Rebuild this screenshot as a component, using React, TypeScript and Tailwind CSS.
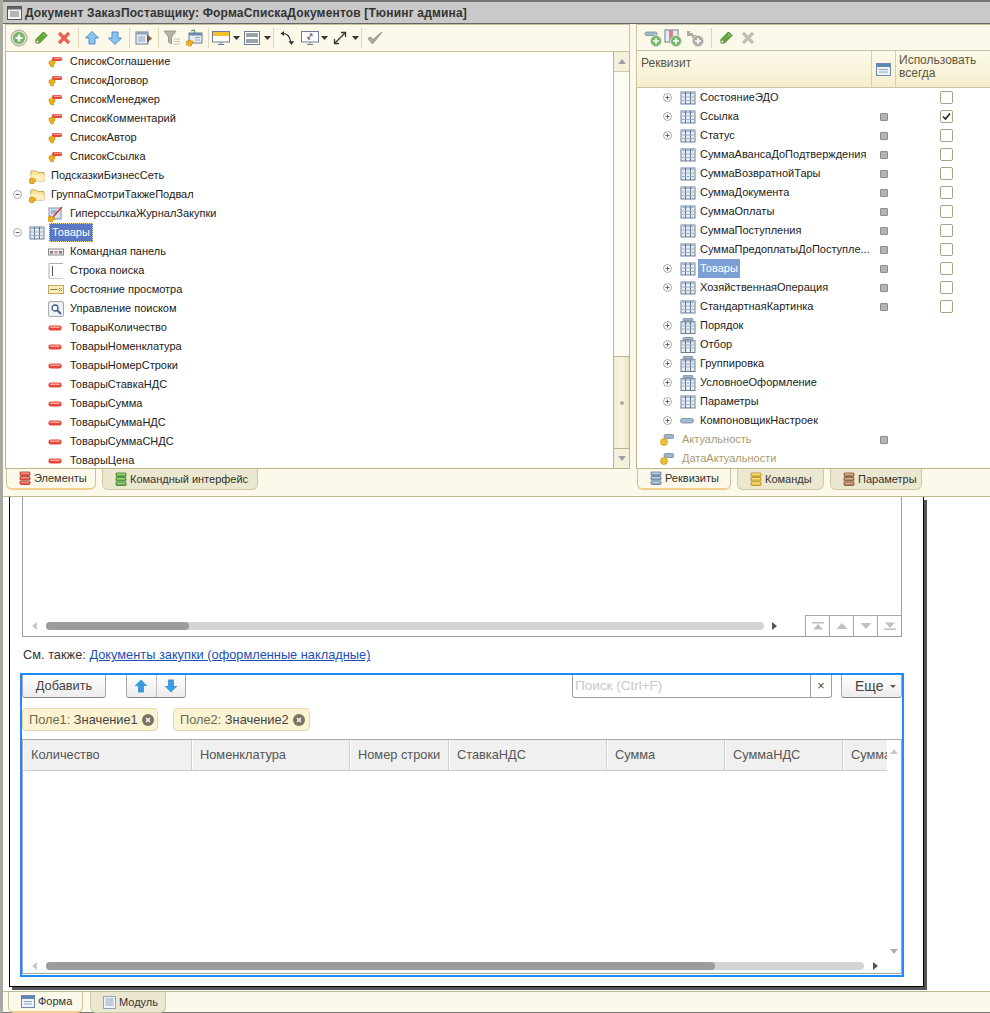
const TableIcon = ({ cap = false }: { cap?: boolean }) => (
  <svg width="16" height="16" viewBox="0 0 16 16">
    {cap && <rect x="3" y="0.5" width="10" height="2.5" rx="1" fill="#9fb4c8" stroke="#6d8298" strokeWidth="0.7" />}
    <rect x="1" y={cap ? 3.5 : 2} width="14" height="12" fill="#e4ecf4" stroke="#6c7f95" />
    <rect x="1" y={cap ? 3.5 : 2} width="14" height="2" fill="#a9bccf" />
    <path d={cap ? "M5.5 3.5V15.5M10.5 3.5V15.5" : "M5.5 2V14M10.5 2V14"} stroke="#5f7389" strokeWidth="1" />
    <path d={cap ? "M2 8h12M2 11h12" : "M2 7h12M2 10.5h12"} stroke="#9fb0c2" strokeWidth="1" />
  </svg>
);

const Expander = ({ open = false }: { open?: boolean }) => (
  <svg width="9" height="9" viewBox="0 0 9 9" className="block">
    <circle cx="4.5" cy="4.5" r="4" fill="#fff" stroke="#a8a8a8" />
    <path d={open ? "M2.5 4.5h4" : "M2.5 4.5h4M4.5 2.5v4"} stroke="#666" strokeWidth="1" />
  </svg>
);

const RedBar = () => (
  <svg width="14" height="8" viewBox="0 0 14 8">
    <rect x="0.5" y="1.5" width="13" height="5" rx="2" fill="#e8463a" />
    <rect x="2" y="2.5" width="10" height="1.5" rx="0.7" fill="#f7a79c" />
  </svg>
);

const KeyBar = () => (
  <svg width="14" height="12" viewBox="0 0 14 12">
    <rect x="4" y="1" width="10" height="4" rx="1.6" fill="#e8463a" />
    <rect x="6" y="1.7" width="7" height="1.2" fill="#f7a79c" />
    <path d="M1 5h2v-1h2v1h2v3h-1.500v3h-2l-0.500-1h-1v-2h-1z" fill="#eeb11d" stroke="#b9810f" strokeWidth="0.5" />
  </svg>
);

const AttrBar = ({ key2 = false }: { key2?: boolean }) =>
  key2 ? (
    <svg width="14" height="12" viewBox="0 0 14 12">
      <rect x="4" y="0.5" width="10" height="4" rx="1.8" fill="#9fb4c8" stroke="#64809a" strokeWidth="0.7" />
      <circle cx="4" cy="8" r="3.500" fill="#f0c030" stroke="#c29a20" strokeWidth="0.7" />
    </svg>
  ) : (
    <svg width="14" height="6" viewBox="0 0 14 6">
      <rect x="0.5" y="0.5" width="13" height="4.500" rx="2" fill="#a8bccf" stroke="#64809a" strokeWidth="0.7" />
    </svg>
  );

const Folder = () => (
  <svg width="16" height="16" viewBox="0 0 16 16">
    <path d="M2 3h5l1.500 1.500H15V13H2z" fill="#fbe39a" stroke="#c9a94f" />
    <path d="M2 7h13v6H2z" fill="#fdeeb9" />
    <path d="M0 11h2v-1h2v1h2.500v2.500H5v2.500H2l-0.500-1H0z" fill="#eeb11d" stroke="#b9810f" strokeWidth="0.5" />
  </svg>
);

const LinkIcon = () => (
  <svg width="16" height="16" viewBox="0 0 16 16">
    <rect x="1" y="2" width="12" height="11" fill="#d6e2f0" stroke="#7f93ab" />
    <path d="M3 5h6M3 7h5" stroke="#6c88aa" />
    <path d="M5 11L14 1" stroke="#d8281c" strokeWidth="1.200" />
    <path d="M0 11h2v-1h2v1h2.500v2.500H5v2.500H2l-0.500-1H0z" fill="#eeb11d" stroke="#b9810f" strokeWidth="0.5" />
  </svg>
);

const CmdBar = () => (
  <svg width="16" height="8" viewBox="0 0 16 8">
    <rect x="0.5" y="1" width="15" height="6" fill="#eee" stroke="#888" />
    <rect x="2" y="3" width="3" height="2.500" fill="#777" />
    <rect x="6.500" y="3" width="3" height="2.500" fill="#c88" />
    <rect x="11" y="3" width="3" height="2.500" fill="#777" />
  </svg>
);

const SearchLine = () => (
  <svg width="16" height="16" viewBox="0 0 16 16">
    <path d="M1 15.500V0.500H15" fill="none" stroke="#b0b0b0" />
    <path d="M1 15.500H15" stroke="#ccc" />
    <path d="M4.500 3v10" stroke="#555" />
  </svg>
);

const StateIcon = () => (
  <svg width="16" height="10" viewBox="0 0 16 10">
    <rect x="0.5" y="0.5" width="15" height="8" fill="#fbeeb8" stroke="#c8a860" />
    <path d="M2.500 4.500h7" stroke="#8a7a40" />
    <path d="M11 3l3 3M14 3l-3 3" stroke="#a89858" />
  </svg>
);

const SearchBtn = () => (
  <svg width="16" height="16" viewBox="0 0 16 16">
    <rect x="0.500" y="0.500" width="15" height="15" rx="1.500" fill="#eef0f3" stroke="#a8a8a8" />
    <circle cx="7" cy="7" r="3" fill="#fff" stroke="#3f5f85" strokeWidth="1.300" />
    <path d="M9.500 9.500L13 13" stroke="#3f5f85" strokeWidth="1.800" />
  </svg>
);

const Plus = () => (
  <svg width="18" height="18" viewBox="0 0 18 18">
    <circle cx="9" cy="9" r="8" fill="#dcdcd0" stroke="#a8a8a0" />
    <circle cx="9" cy="9" r="6" fill="#74b765" />
    <path d="M9 5.500v7M5.500 9h7" stroke="#fff" strokeWidth="2.200" />
  </svg>
);

const Pencil = () => (
  <svg width="16" height="16" viewBox="0 0 16 16">
    <path d="M10.500 2l3.500 3.500L6.500 13H3v-3.500z" fill="#62a93e" stroke="#3c7f2a" />
    <path d="M3 13l1-3 2 2z" fill="#e8e4c8" />
    <path d="M10 4l2 2" stroke="#b8e090" />
  </svg>
);

const Cross = ({ grey = false }: { grey?: boolean }) => (
  <svg width="16" height="16" viewBox="0 0 16 16">
    <path d="M3 3l10 10M13 3L3 13" stroke={grey ? "#c4c0b0" : "#e8604f"} strokeWidth="3.200" />
  </svg>
);

const HouseArrow = ({ down = false }: { down?: boolean }) => (
  <svg width="16" height="16" viewBox="0 0 16 16">
    <path d={down ? "M8 14.500L14.500 8H11V2H5v6H1.500z" : "M8 1.500L14.500 8H11v6H5V8H1.500z"} fill="#8cc2ee" stroke="#4f8fc8" />
  </svg>
);

const Dd = () => (
  <svg width="7" height="4" viewBox="0 0 7 4">
    <path d="M0 0h7L3.500 4z" fill="#333" />
  </svg>
);

const Sep = ({ w }: { w: string }) => (
  <div className={`${w} flex justify-center`}>
    <div className="w-px h-[20px] bg-[#ddd7b8]" />
  </div>
);

const ListArrowIcon = () => (
  <svg width="18" height="16" viewBox="0 0 18 16">
    <rect x="1" y="2" width="12" height="12" fill="#e8eef5" stroke="#6c7f95" />
    <rect x="1" y="2" width="12" height="2.500" fill="#8ea4ba" />
    <path d="M3 7h7M3 9h7M3 11h7" stroke="#8ea4ba" />
    <path d="M12 4.500L17 8.500L12 12.500z" fill="#7a5530" />
  </svg>
);

const FunnelIcon = () => (
  <svg width="18" height="16" viewBox="0 0 18 16">
    <path d="M1 1h12L8.500 7v7L5.500 12V7z" fill="#b8b4a4" stroke="#9c9888" />
    <path d="M11 9h6M11 11.500h6M11 14h6" stroke="#c4c0b0" />
  </svg>
);

const FormKeyIcon = () => (
  <svg width="18" height="18" viewBox="0 0 18 18">
    <path d="M5 2l3-1 1 3" fill="none" stroke="#4c9c48" strokeWidth="1.300" />
    <rect x="3" y="4" width="13" height="10" fill="#e4ecf4" stroke="#6c7f95" />
    <rect x="3" y="4" width="13" height="2.500" fill="#6c88aa" />
    <path d="M9 8.500h5M9 11h5" stroke="#8ea4ba" />
    <path d="M0.500 12h2v-1h2v1H7v2.500H5.500V17H2.500l-0.500-1H0.500z" fill="#eeb11d" stroke="#b9810f" strokeWidth="0.5" />
  </svg>
);

const MonitorIcon = ({ top = true }: { top?: boolean }) => (
  <svg width="18" height="16" viewBox="0 0 18 16">
    <rect x="0.500" y="1.500" width="17" height="10.500" fill="#fff" stroke="#6c7f95" />
    {top && <rect x="1" y="2" width="16" height="4" fill="#f4c430" />}
    {!top && <path d="M7 9l4-5M11 4H8.500M11 4v2.500M7 9h2.500M7 9V6.500" stroke="#555" fill="none" />}
    <path d="M6 14.500h6M9 12v2.500" stroke="#6c7f95" />
  </svg>
);

const RowsIcon = () => (
  <svg width="16" height="16" viewBox="0 0 16 16">
    <rect x="0.500" y="1.500" width="15" height="13" fill="#fff" stroke="#6c7f95" />
    <rect x="2" y="3" width="12" height="4" fill="#9aa2aa" />
    <rect x="2" y="9" width="12" height="4" fill="#9aa2aa" />
  </svg>
);

const SwapIcon = () => (
  <svg width="16" height="16" viewBox="0 0 16 16">
    <path d="M3 3.500C8 3 11 7 12 13" fill="none" stroke="#333" strokeWidth="1.200" />
    <path d="M5 1L1.500 3.500L5 6z" fill="#333" />
    <path d="M9.500 11.500L12.500 15L15 11z" fill="#333" />
  </svg>
);

const DiagIcon = () => (
  <svg width="14" height="14" viewBox="0 0 14 14">
    <path d="M2 12L12 2" stroke="#333" strokeWidth="1.300" />
    <path d="M8 1.500h4.500V6M1.500 8v4.500H6" fill="none" stroke="#333" strokeWidth="1.300" />
  </svg>
);

const CheckTool = () => (
  <svg width="18" height="16" viewBox="0 0 18 16">
    <path d="M2 8.500L6.500 14L16 2L7 9.500L4.500 7z" fill="#b0a8a0" stroke="#98908a" />
  </svg>
);

const AddField = ({ kind }: { kind: "bar" | "table" | "grey" }) => (
  <svg width="18" height="18" viewBox="0 0 18 18">
    {kind === "bar" && <rect x="1" y="3" width="12" height="3.500" rx="1.500" fill="#a8bccf" stroke="#64809a" strokeWidth="0.7" />}
    {kind === "table" && (
      <g>
        <rect x="1" y="1" width="13" height="12" fill="#e8eef5" stroke="#6c7f95" />
        <rect x="5" y="1" width="4" height="12" fill="#d98080" />
      </g>
    )}
    {kind === "grey" && <path d="M1 2h3v2h3v2h4V9H6V7H1z" fill="#b0ada0" />}
    <circle cx="12" cy="12" r="5.500" fill={kind === "grey" ? "#a8a8a0" : "#74b765"} stroke="#dcdcd0" />
    <path d="M12 9v6M9 12h6" stroke="#fff" strokeWidth="1.600" />
  </svg>
);

const Slot = ({ w, children }: { w: string; children: React.ReactNode }) => (
  <div className={`${w} h-full flex items-center justify-center`}>{children}</div>
);

const StackIcon = ({ from, to, line }: { from: string; to: string; line: string }) => (
  <svg width="12" height="15" viewBox="0 0 12 15">
    {[1, 5.500, 10].map((y) => (
      <g key={y}>
        <rect x="1" y={y} width="10" height="3.500" rx="0.800" fill={from} stroke={line} strokeWidth="0.800" />
        <rect x="2" y={y + 0.6} width="8" height="1" fill={to} />
      </g>
    ))}
  </svg>
);

const Tab = ({
  active = false,
  w,
  icon,
  children,
}: {
  active?: boolean;
  w: string;
  icon: React.ReactNode;
  children: React.ReactNode;
}) => (
  <div
    className={`${w} h-[21px] flex items-center gap-[3px] pl-[12px] rounded-b-[6px] border-x border-b text-[11px] whitespace-nowrap text-[#333] ${
      active ? "bg-[#fcf9ea] border-[#c9c3a0] border-b-[2px] border-b-[#f2cf8e]" : "bg-[#ece7cf] border-[#cfc9a8]"
    }`}
  >
    {icon}
    <span>{children}</span>
  </div>
);

const LeftRow = ({
  level,
  icon,
  text,
  exp,
  selected = false,
}: {
  level: 0 | 1;
  icon: React.ReactNode;
  text: string;
  exp?: boolean;
  selected?: boolean;
}) => (
  <div className={`h-[19px] flex items-center ${level === 1 ? "pl-[42px]" : "pl-[7px]"}`}>
    {level === 0 && <div className="w-[16px] flex items-center">{exp && <Expander open />}</div>}
    <div className="w-[22px] flex items-center">{icon}</div>
    {selected ? (
      <span className="-ml-[2px] px-[2px] h-[19px] flex items-center text-white bg-[#5b78c6] border border-dotted border-[#e8d890]">
        {text}
      </span>
    ) : (
      <span className="text-[#1c1c1c]">{text}</span>
    )}
  </div>
);

const leftItems: { text: string; kind: "key" | "red" | "cmd" | "line" | "state" | "search" }[] = [
  { text: "Командная панель", kind: "cmd" },
  { text: "Строка поиска", kind: "line" },
  { text: "Состояние просмотра", kind: "state" },
  { text: "Управление поиском", kind: "search" },
  { text: "ТоварыКоличество", kind: "red" },
  { text: "ТоварыНоменклатура", kind: "red" },
  { text: "ТоварыНомерСтроки", kind: "red" },
  { text: "ТоварыСтавкаНДС", kind: "red" },
  { text: "ТоварыСумма", kind: "red" },
  { text: "ТоварыСуммаНДС", kind: "red" },
  { text: "ТоварыСуммаСНДС", kind: "red" },
  { text: "ТоварыЦена", kind: "red" },
];

const iconByKind = {
  key: <KeyBar />,
  red: <RedBar />,
  cmd: <CmdBar />,
  line: <SearchLine />,
  state: <StateIcon />,
  search: <SearchBtn />,
};

const rightRows: {
  text: string;
  exp?: boolean;
  marker?: boolean;
  check?: "on" | "off";
  icon?: "cap" | "bar";
  selected?: boolean;
}[] = [
  { text: "СостояниеЭДО", exp: true, check: "off" },
  { text: "Ссылка", exp: true, marker: true, check: "on" },
  { text: "Статус", exp: true, marker: true, check: "off" },
  { text: "СуммаАвансаДоПодтверждения", marker: true, check: "off" },
  { text: "СуммаВозвратнойТары", marker: true, check: "off" },
  { text: "СуммаДокумента", marker: true, check: "off" },
  { text: "СуммаОплаты", marker: true, check: "off" },
  { text: "СуммаПоступления", marker: true, check: "off" },
  { text: "СуммаПредоплатыДоПоступле...", marker: true, check: "off" },
  { text: "Товары", exp: true, marker: true, check: "off", selected: true },
  { text: "ХозяйственнаяОперация", exp: true, marker: true, check: "off" },
  { text: "СтандартнаяКартинка", marker: true, check: "off" },
  { text: "Порядок", exp: true, icon: "cap" },
  { text: "Отбор", exp: true, icon: "cap" },
  { text: "Группировка", exp: true, icon: "cap" },
  { text: "УсловноеОформление", exp: true, icon: "cap" },
  { text: "Параметры", exp: true },
  { text: "КомпоновщикНастроек", exp: true, icon: "bar" },
];

const Marker = () => <div className="w-[8px] h-[8px] bg-[#b4b4b4] border border-[#8c8c8c] rounded-[1px]" />;

const Check = ({ on }: { on: boolean }) => (
  <div className="w-[13px] h-[13px] bg-white border border-[#a8a284] rounded-[2px] flex items-center justify-center">
    {on && (
      <svg width="9" height="9" viewBox="0 0 9 9">
        <path d="M1 4.500L3.500 7L8 1.500" fill="none" stroke="#222" strokeWidth="1.600" />
      </svg>
    )}
  </div>
);

const Tri = ({ dir, color }: { dir: "l" | "r" | "u" | "d"; color: string }) => {
  const d = { l: "M5 0v8L0 4z", r: "M0 0v8l5-4z", u: "M0 5h8L4 0z", d: "M0 0h8L4 5z" }[dir];
  return (
    <svg width={dir === "l" || dir === "r" ? 5 : 8} height={dir === "l" || dir === "r" ? 8 : 5} className="block">
      <path d={d} fill={color} />
    </svg>
  );
};

const NavBtn = ({ d }: { d: string }) => (
  <div className="w-[24px] h-full flex items-center justify-center border-l border-[#a8a8a8]">
    <svg width="12" height="8" viewBox="0 0 12 8">
      <path d={d} fill="#c0c0c0" />
    </svg>
  </div>
);

const Chip = ({ w, label, value }: { w: string; label: string; value: string }) => (
  <div className={`${w} h-[23px] flex items-center pl-[6px] gap-[4px] bg-[#fbf3d2] border border-[#e4d9a8] rounded-[4px]`}>
    <span className="text-[#6b6b50] whitespace-nowrap">
      {label} <span className="text-[#444]">{value}</span>
    </span>
    <svg width="12" height="12" viewBox="0 0 12 12" className="shrink-0">
      <circle cx="6" cy="6" r="6" fill="#7b7460" />
      <path d="M4 4l4 4M8 4l-4 4" stroke="#fff" strokeWidth="1.400" />
    </svg>
  </div>
);

const columns: { w: string; text: string }[] = [
  { w: "w-[169px]", text: "Количество" },
  { w: "w-[158px]", text: "Номенклатура" },
  { w: "w-[99px]", text: "Номер строки" },
  { w: "w-[158px]", text: "СтавкаНДС" },
  { w: "w-[118px]", text: "Сумма" },
  { w: "w-[118px]", text: "СуммаНДС" },
  { w: "w-[100px]", text: "СуммаСНДС" },
];

const App = () => {
  return (
    <div className="w-[990px] h-[1013px] overflow-hidden flex flex-col bg-white border-l-[3px] border-[#a8a8a0] text-[11px] font-['Liberation_Sans',Arial,sans-serif]">
      {/* заголовок */}
      <div className="h-[24px] -ml-[3px] pt-px shrink-0 flex items-center pl-[7px] gap-[3px] bg-[#c9c9c9] border-t-2 border-b border-t-[#777] border-b-[#666]">
        <svg width="15" height="14" viewBox="0 0 15 14">
          <rect x="0.500" y="0.500" width="14" height="13" fill="#f2f2f2" stroke="#555" />
          <rect x="1" y="1" width="13" height="2.500" fill="#666" />
          <path d="M3 6h9M3 8h9M3 10h9" stroke="#777" />
        </svg>
        <span className="font-bold text-[12px] tracking-[0.17px] text-[#333]">Документ ЗаказПоставщику: ФормаСпискаДокументов [Тюнинг админа]</span>
      </div>

      {/* панели конфигуратора */}
      <div className="h-[473px] shrink-0 flex bg-[#fcf9ea] border-b border-[#bdb58c]">
        <div className="ml-[2px] w-[625px] shrink-0 flex flex-col">
          <div className="h-[28px] flex items-center pl-px border-x border-t border-b border-[#c9c3a0]">
            <Slot w="w-[23px]"><Plus /></Slot>
            <Slot w="w-[22px]"><Pencil /></Slot>
            <Slot w="w-[24px]"><Cross /></Slot>
            <Sep w="w-[4px]" />
            <Slot w="w-[24px]"><HouseArrow /></Slot>
            <Slot w="w-[22px]"><HouseArrow down /></Slot>
            <Sep w="w-[6px]" />
            <Slot w="w-[24px]"><ListArrowIcon /></Slot>
            <Sep w="w-[4px]" />
            <Slot w="w-[23px]"><FunnelIcon /></Slot>
            <Slot w="w-[24px]"><FormKeyIcon /></Slot>
            <Sep w="w-[3px]" />
            <Slot w="w-[22px]"><MonitorIcon /></Slot>
            <Slot w="w-[9px]"><Dd /></Slot>
            <Slot w="w-[22px]"><RowsIcon /></Slot>
            <Slot w="w-[8px]"><Dd /></Slot>
            <Sep w="w-[4px]" />
            <Slot w="w-[24px]"><SwapIcon /></Slot>
            <Slot w="w-[21px]"><MonitorIcon top={false} /></Slot>
            <Slot w="w-[8px]"><Dd /></Slot>
            <Slot w="w-[24px]"><DiagIcon /></Slot>
            <Slot w="w-[7px]"><Dd /></Slot>
            <Sep w="w-[4px]" />
            <Slot w="w-[24px]"><CheckTool /></Slot>
          </div>
          <div className="h-[417px] flex border-x border-b border-[#bdb58c]">
            <div className="flex-1 bg-white overflow-hidden">
              {["СписокСоглашение", "СписокДоговор", "СписокМенеджер", "СписокКомментарий", "СписокАвтор", "СписокСсылка"].map((t) => (
                <LeftRow key={t} level={1} icon={<KeyBar />} text={t} />
              ))}
              <LeftRow level={0} icon={<Folder />} text="ПодсказкиБизнесСеть" />
              <LeftRow level={0} exp icon={<Folder />} text="ГруппаСмотриТакжеПодвал" />
              <LeftRow level={1} icon={<LinkIcon />} text="ГиперссылкаЖурналЗакупки" />
              <LeftRow level={0} exp icon={<TableIcon />} text="Товары" selected />
              {leftItems.map((it) => (
                <LeftRow key={it.text} level={1} icon={iconByKind[it.kind]} text={it.text} />
              ))}
            </div>
            <div className="w-[16px] flex flex-col border-l border-[#bdb58c] bg-[#fdfbf2]">
              <div className="h-[20px] flex items-center justify-center border-b border-[#cfc9a8] bg-[#f4f0dc]">
                <Tri dir="u" color="#a0a0a0" />
              </div>
              <div className="flex-1" />
              <div className="h-[92px] flex items-center justify-center border-t border-[#bdb58c] bg-gradient-to-r from-[#f0ebd0] via-[#f8f4e2] to-[#e8e2c0]">
                <div className="w-[4px] h-[4px] rounded-full bg-[#b0ac98]" />
              </div>
              <div className="h-[20px] flex items-center justify-center border-t border-[#bdb58c] bg-[#f4f0dc]">
                <Tri dir="d" color="#a0a0a0" />
              </div>
            </div>
          </div>
          <div className="flex gap-[6px] pl-px">
            <Tab active w="w-[90px]" icon={<StackIcon from="#e85a4c" to="#f7a79c" line="#b03a30" />}>Элементы</Tab>
            <Tab w="w-[156px]" icon={<StackIcon from="#6cb04c" to="#b0e090" line="#3c7f2a" />}>Командный интерфейс</Tab>
          </div>
        </div>

        <div className="ml-[6px] flex-1 min-w-0 overflow-hidden flex flex-col">
          <div className="h-[26px] shrink-0 flex items-center pl-[6px] border-l border-t border-[#c9c3a0]">
            <Slot w="w-[20px]"><AddField kind="bar" /></Slot>
            <Slot w="w-[20px]"><AddField kind="table" /></Slot>
            <Slot w="w-[24px]"><AddField kind="grey" /></Slot>
            <Sep w="w-[8px]" />
            <Slot w="w-[22px]"><Pencil /></Slot>
            <Slot w="w-[22px]"><Cross grey /></Slot>
          </div>
          <div className="h-[38px] shrink-0 flex border-l border-y border-[#c9c3a0] bg-gradient-to-b from-[#fcf9ea] to-[#f6efce] text-[12px] text-[#5c5640]">
            <div className="w-[235px] pl-[4px] pt-[3px] border-r border-[#d8d0a8]">Реквизит</div>
            <div className="w-[24px] flex items-center justify-center border-r border-[#d8d0a8]">
              <svg width="15" height="13" viewBox="0 0 15 13">
                <rect x="0.500" y="0.500" width="14" height="12" fill="#eef3f8" stroke="#6c88aa" />
                <rect x="1" y="1" width="13" height="3" fill="#5c88b4" />
                <path d="M3 6.500h9M3 9h9" stroke="#8ea4ba" />
              </svg>
            </div>
            <div className="pl-[3px] pt-[3px] leading-[13px]">Использовать<br />всегда</div>
          </div>
          <div className="h-[381px] shrink-0 bg-white border-l border-b border-[#bdb58c] overflow-hidden">
            {rightRows.map((r) => (
              <div key={r.text} className="h-[19px] flex items-center">
                <div className="w-[235px] shrink-0 flex items-center pl-[26px]">
                  <div className="w-[17px] flex items-center">{r.exp && <Expander />}</div>
                  <div className="w-[20px] flex items-center">
                    {r.icon === "bar" ? <AttrBar /> : <TableIcon cap={r.icon === "cap"} />}
                  </div>
                  {r.selected ? (
                    <span className="-ml-[2px] px-[2px] h-[19px] flex items-center text-white bg-[#7d9fd6]">{r.text}</span>
                  ) : (
                    <span className="text-[#1c1c1c] whitespace-nowrap">{r.text}</span>
                  )}
                </div>
                <div className="w-[24px] shrink-0 flex justify-center">{r.marker && <Marker />}</div>
                <div className="w-[100px] shrink-0 flex justify-center">{r.check && <Check on={r.check === "on"} />}</div>
              </div>
            ))}
            {["Актуальность", "ДатаАктуальности"].map((t, i) => (
              <div key={t} className="h-[19px] flex items-center">
                <div className="w-[235px] shrink-0 flex items-center pl-[23px]">
                  <div className="w-[22px] flex items-center"><AttrBar key2 /></div>
                  <span className="text-[#a89a70]">{t}</span>
                </div>
                <div className="w-[24px] shrink-0 flex justify-center">{i === 0 && <Marker />}</div>
              </div>
            ))}
          </div>
          <div className="flex gap-[6px] pl-px">
            <Tab active w="w-[94px]" icon={<StackIcon from="#8ea8c0" to="#d0dde8" line="#5a7896" />}>Реквизиты</Tab>
            <Tab w="w-[87px]" icon={<StackIcon from="#e8c040" to="#f8e8a0" line="#b09020" />}>Команды</Tab>
            <Tab w="w-[92px]" icon={<StackIcon from="#b08060" to="#e0c0a8" line="#805030" />}>Параметры</Tab>
          </div>
        </div>
      </div>

      {/* форма */}
      <div className="flex-1 pl-[6px]">
        <div className="w-[915px] h-[490px] bg-white border-x border-b border-black shadow-[3px_3px_0_#555] pl-[12px]">
          <div className="w-[880px] h-[140px] border-x border-b border-[#a0a0a0] flex flex-col justify-end">
            <div className="h-[21px] flex items-center">
              <div className="ml-[9px] w-[14px]"><Tri dir="l" color="#c8c8c8" /></div>
              <div className="w-[718px] h-[8px] rounded-full bg-[#d4d4d4]">
                <div className="w-[143px] h-[8px] rounded-full bg-[#9c9c9c]" />
              </div>
              <div className="ml-[8px]"><Tri dir="r" color="#555" /></div>
              <div className="ml-auto h-[21px] flex border-t border-[#a8a8a8]">
                <NavBtn d="M0 0h12v1.500H0zM6 2l5 5.500H1z" />
                <NavBtn d="M6 1l5.500 6H.5z" />
                <NavBtn d="M6 7L.5 1h11z" />
                <NavBtn d="M6 6L1 .5h10zM0 6.500h12V8H0z" />
              </div>
            </div>
          </div>

          <div className="h-[36px] flex items-center pl-px text-[12.8px] text-[#333]">
            <span>См. также:&nbsp;</span>
            <span className="text-[#1c50b4] underline">Документы закупки (оформленные накладные)</span>
          </div>

          <div className="-ml-[2px] w-[884px] h-[304px] border-2 border-[#1e8cff] flex flex-col text-[12.8px]">
            <div className="h-[23px] shrink-0 flex">
              <div className="w-[84px] flex items-center justify-center bg-gradient-to-b from-white to-[#ececec] border-x border-b border-[#a8a8a8] border-b-[#888] rounded-b-[3px] text-[#444]">
                Добавить
              </div>
              <div className="ml-[20px] w-[60px] flex bg-gradient-to-b from-white to-[#ececec] border-x border-b border-[#a8a8a8] border-b-[#888] rounded-b-[3px]">
                {[false, true].map((d, i) => (
                  <div key={i} className={`w-[30px] flex items-center justify-center ${i ? "border-l border-[#c0c0c0]" : ""}`}>
                    <svg width="14" height="14" viewBox="0 0 12 12">
                      <path d={d ? "M6 11.500L11.500 6H8.500V.5h-5V6H.5z" : "M6 .5L11.500 6H8.500v5.500h-5V6H.5z"} fill="#3c9ade" />
                    </svg>
                  </div>
                ))}
              </div>
              <div className="ml-auto w-[260px] flex border-x border-b border-[#a0a0a0] rounded-b-[3px] bg-white">
                <div className="flex-1 flex items-center pl-[2px] text-[13.5px] text-[#c8c8c8]">Поиск (Ctrl+F)</div>
                <div className="w-[21px] flex items-center justify-center border-l border-[#a0a0a0] text-[#444]">×</div>
              </div>
              <div className="ml-[9px] w-[61px] flex items-center gap-[6px] pl-[13px] bg-gradient-to-b from-white to-[#ececec] border-x border-b border-[#a8a8a8] border-b-[#888] rounded-b-[3px] text-[#444] text-[14px]">
                Еще
                <svg width="6" height="3" viewBox="0 0 6 3"><path d="M0 0h6L3 3z" fill="#555" /></svg>
              </div>
            </div>

            <div className="mt-[10px] shrink-0 flex gap-[15px]">
              <Chip w="w-[136px]" label="Поле1:" value="Значение1" />
              <Chip w="w-[137px]" label="Поле2:" value="Значение2" />
            </div>

            <div className="mt-[8px] w-[880px] h-[235px] shrink-0 border border-[#a8a8a8] flex flex-col">
              <div className="flex-1 flex min-h-0">
                <div className="w-[864px] overflow-hidden">
                  <div className="flex w-[1000px] h-[31px] border-b border-[#cccccc]">
                    {columns.map((c) => (
                      <div key={c.text} className={`${c.w} shrink-0 flex items-center pl-[7px] bg-[#f0f0f0] border-r border-l border-r-[#d0d0d0] border-l-white text-[#555]`}>
                        {c.text}
                      </div>
                    ))}
                  </div>
                </div>
                <div className="flex-1 flex flex-col items-center justify-between pt-[9px] pb-[5px]">
                  <Tri dir="u" color="#c8c8c8" />
                  <Tri dir="d" color="#b0b0b0" />
                </div>
              </div>
              <div className="h-[14px] flex items-center shrink-0">
                <div className="ml-[9px] w-[14px]"><Tri dir="l" color="#c8c8c8" /></div>
                <div className="w-[818px] h-[8px] rounded-full bg-[#d4d4d4]">
                  <div className="w-[669px] h-[8px] rounded-full bg-[#9c9c9c]" />
                </div>
                <div className="ml-[9px]"><Tri dir="r" color="#555" /></div>
              </div>
            </div>
          </div>
        </div>
      </div>

      {/* нижние вкладки */}
      <div className="h-[22px] shrink-0 -ml-px bg-[#fcf9ea] border-t border-b border-t-[#bdb58c] border-b-[#777] flex gap-[7px] pl-[6px]">
        <Tab active w="w-[75px]" icon={
          <svg width="14" height="13" viewBox="0 0 14 13">
            <rect x="0.500" y="0.500" width="13" height="12" fill="#eef3f8" stroke="#6c88aa" />
            <rect x="1" y="1" width="12" height="3" fill="#5c88b4" />
            <path d="M3 6.500h8M3 9h8" stroke="#8ea4ba" />
          </svg>
        }>Форма</Tab>
        <Tab w="w-[76px]" icon={
          <svg width="13" height="13" viewBox="0 0 13 13">
            <rect x="0.500" y="0.500" width="12" height="12" fill="#eef3f8" stroke="#8ea4ba" />
            <path d="M2.500 3h8M2.500 5h8M2.500 7h8M2.500 9h8" stroke="#8ea4ba" />
          </svg>
        }>Модуль</Tab>
      </div>
    </div>
  );
};

export default App;
